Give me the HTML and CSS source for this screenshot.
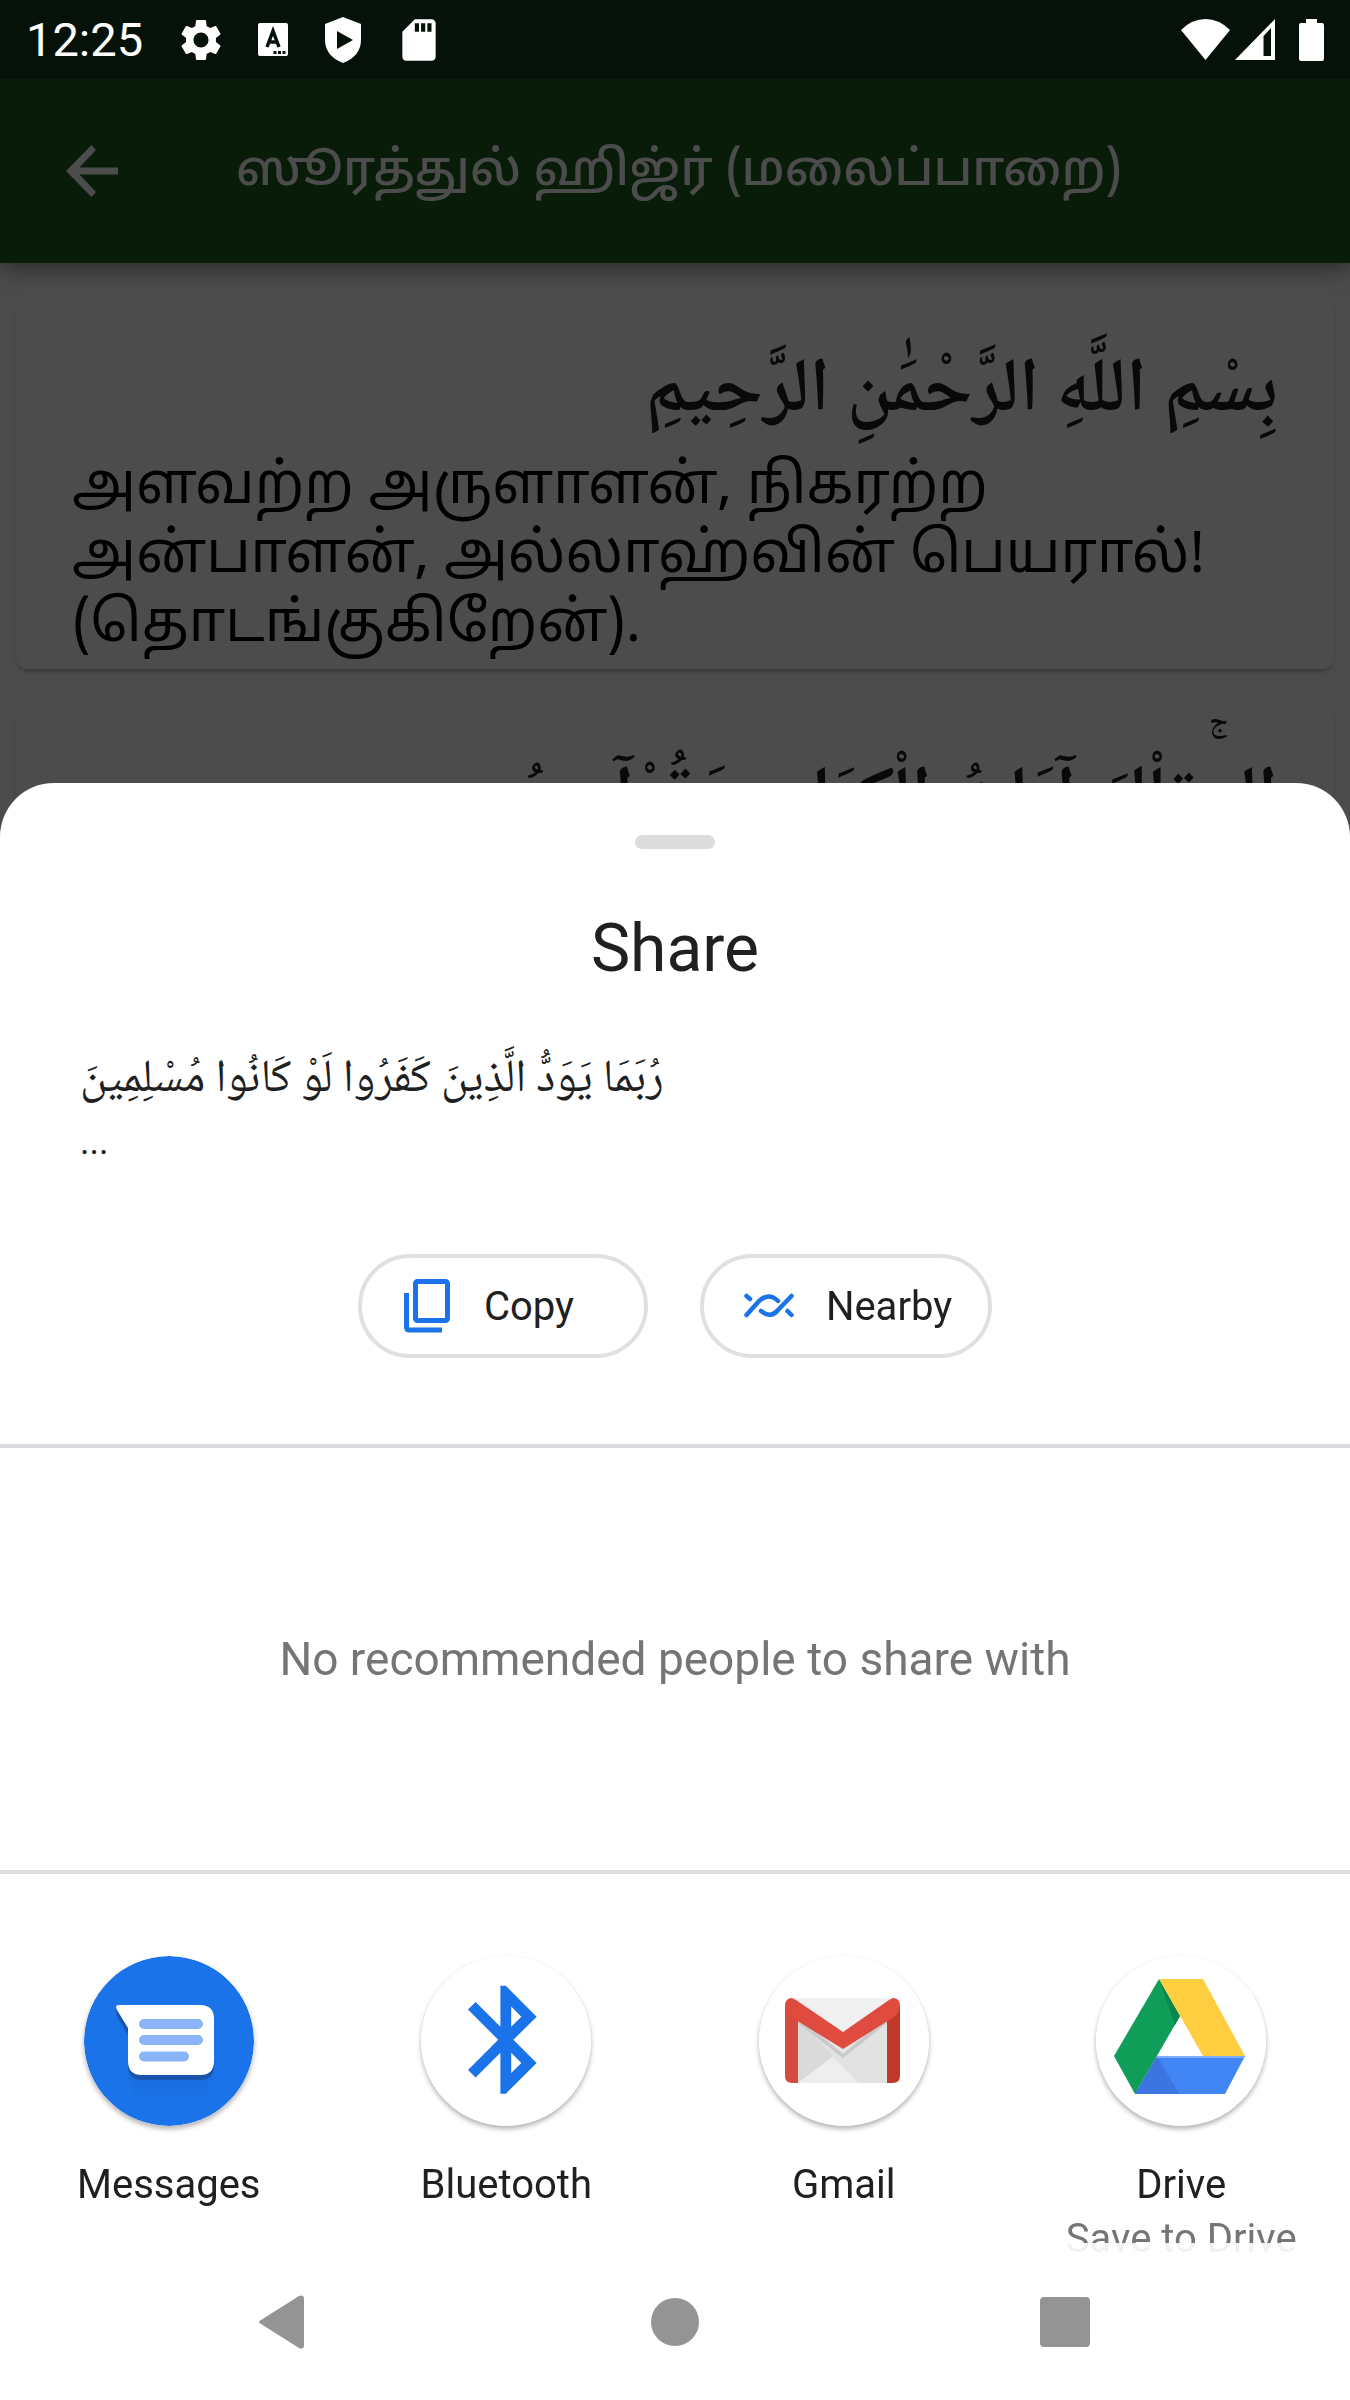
FILE: index.html
```html
<!DOCTYPE html>
<html lang="ta">
<head>
<meta charset="utf-8">
<meta name="viewport" content="width=device-width, initial-scale=1">
<title>Share</title>
<link rel="stylesheet" href="styles.css">
</head>
<body>
<div class="app">
  <header class="app-bar">
    <button class="icon-button" type="button" aria-label="Back">
      <svg width="54" height="54" viewBox="0 0 54 54"><path d="M54 23.500H15.500L32 6 27.500 1 2 27 27.500 53 32 48 15.500 30.500H54z" fill="currentColor"/></svg>
    </button>
    <h1 class="app-title">ஸூரத்துல் ஹிஜ்ர் (மலைப்பாறை)</h1>
  </header>
  <main class="verses">
    <article class="verse">
      <p class="arabic" lang="ar" dir="rtl">بِسْمِ اللَّهِ الرَّحْمَٰنِ الرَّحِيمِ</p>
      <p class="tamil">அளவற்ற அருளாளன், நிகரற்ற அன்பாளன், அல்லாஹ்வின் பெயரால்! (தொடங்குகிறேன்).</p>
    </article>
    <article class="verse">
      <p class="arabic" lang="ar" dir="rtl">الرۚ تِلْكَ آيَاتُ الْكِتَابِ وَقُرْآنٍ مُبِينٍ</p>
    </article>
  </main>
</div>

<div class="scrim"></div>

<div class="status-bar">
  <span class="clock">12:25</span>
  <div class="status-icons">
    <svg width="50" height="50" viewBox="0 0 24 24"><path fill="#fff" d="M19.140 12.940c.04-.3.060-.61.060-.94 0-.32-.02-.64-.07-.94l2.030-1.580c.18-.14.230-.41.120-.61l-1.920-3.320c-.12-.22-.37-.29-.59-.22l-2.390.96c-.5-.38-1.030-.7-1.620-.94l-.36-2.540c-.04-.24-.24-.41-.48-.41h-3.840c-.24 0-.43.170-.47.410l-.36 2.540c-.59.240-1.130.570-1.620.940l-2.390-.96c-.22-.08-.47 0-.59.220L2.740 8.870c-.12.210-.08.470.120.610l2.030 1.580c-.05.300-.09.630-.09.940s.02.640.070.940l-2.030 1.580c-.18.140-.23.410-.12.610l1.920 3.320c.12.220.37.290.59.220l2.390-.96c.5.380 1.030.7 1.620.940l.36 2.540c.05.240.24.410.48.410h3.840c.24 0 .44-.17.470-.41l.36-2.540c.59-.24 1.130-.56 1.620-.94l2.390.96c.22.080.47 0 .59-.22l1.920-3.320c.12-.22.070-.47-.12-.61l-2.010-1.580zM12 15.600c-1.980 0-3.600-1.620-3.600-3.600s1.620-3.600 3.600-3.600 3.600 1.620 3.600 3.600-1.620 3.600-3.600 3.600z"/></svg>
    <svg width="30" height="33" viewBox="0 0 30 33"><rect width="30" height="33" rx="2" fill="#fff"/><path d="M9 24L15 8l6 16M11 19h8" fill="none" stroke="#061209" stroke-width="3.500"/><path d="M15.500 28h3v3h-3zM20 28h3v3h-3zM24.500 28h3v3h-3z" fill="#061209"/></svg>
    <svg class="shield" width="38" height="46" viewBox="0 0 38 46"><path fill="#fff" d="M19 0l18 7v16c0 11-7 19-18 23C8 42 1 34 1 23V7z"/><path fill="#061209" d="M13 14l16 9-16 9z"/></svg>
    <svg width="50" height="50" viewBox="0 0 24 24"><path fill="#fff" d="M18 2h-8L4 8v12c0 1.100.9 2 2 2h12c1.100 0 2-.9 2-2V4c0-1.100-.9-2-2-2zm-6 6h-2V4h2v4zm3 0h-2V4h2v4zm3 0h-2V4h2v4z"/></svg>
  </div>
  <div class="status-signal">
    <svg width="49" height="41" viewBox="0 0 49 41"><path fill="#fff" d="M0 11Q11 0 24.500 0T49 11L24.500 41z"/></svg>
    <svg class="cell" width="40" height="41" viewBox="0 0 40 41"><path fill="#fff" fill-rule="evenodd" d="M0 41L40 0v41zM28.500 17v20H36V9z"/></svg>
    <svg width="25" height="42" viewBox="0 0 25 42"><path fill="#fff" d="M7 0h11v4h5q2 0 2 2v34q0 2-2 2H2q-2 0-2-2V6q0-2 2-2h5z"/></svg>
  </div>
</div>

<section class="sheet" role="dialog" aria-labelledby="share-title">
  <div class="handle"></div>
  <h2 class="sheet-title" id="share-title">Share</h2>
  <div class="preview">
    <p class="preview-text" lang="ar" dir="rtl">رُبَمَا يَوَدُّ الَّذِينَ كَفَرُوا لَوْ كَانُوا مُسْلِمِينَ</p>
    <p class="preview-more">...</p>
  </div>
  <div class="actions">
    <button class="chip" type="button">
      <svg width="50" height="56" viewBox="0 0 50 56"><g fill="none" stroke="#1a73e8" stroke-width="5"><rect x="13.500" y="3.500" width="32" height="39" rx="2"/><path d="M4.500 15v34q0 3 3 3H40"/></g></svg>
      Copy
    </button>
    <button class="chip" type="button">
      <svg width="50" height="56" viewBox="0 0 50 56"><g fill="none" stroke="#1a73e8" stroke-width="4.500" stroke-linecap="round" stroke-linejoin="round"><path d="M2.500 18l3.500 3M2.500 37L15 23q10-9 19 0M17 33q10 8 17-1L47.500 18M43.500 33l4 4"/></g></svg>
      Nearby
    </button>
  </div>
  <p class="no-people">No recommended people to share with</p>
  <div class="targets">
    <button class="target" type="button">
      <svg class="target-icon" viewBox="0 0 170 170">
        <defs><linearGradient id="msg-shade" x1="0" y1="0" x2="0" y2="1"><stop offset="0" stop-color="#1a55ad"/><stop offset="1" stop-color="#1a73e8"/></linearGradient></defs>
        <circle cx="85" cy="85" r="85" fill="#1a73e8"/>
        <path d="M32 53v6l12 22v38l8 28h66l12-32z" fill="url(#msg-shade)" opacity=".55"/>
        <path d="M32 54q0-2 3-2h81q14 0 14 14v44q0 14-14 14H58q-14 0-14-14V78L33 60z" fill="#1a55ad"/>
        <path d="M32 51q0-2 3-2h81q14 0 14 14v42q0 14-14 14H58q-14 0-14-14V72L33 54z" fill="#fff"/>
        <path d="M60 68h54M60 84h54M60 100.500h40" stroke="#8ab4f8" stroke-width="10" stroke-linecap="round"/>
      </svg>
      <span class="target-name">Messages</span>
    </button>
    <button class="target" type="button">
      <svg class="target-icon" viewBox="0 0 170 170">
        <circle cx="85" cy="85" r="85" fill="#fff"/>
        <path transform="translate(20 19) scale(5.400)" fill="#1a73e8" d="M17.710 7.710L12 2h-1v7.590L6.410 5 5 6.410 10.590 12 5 17.590 6.410 19 11 14.410V22h1l5.710-5.710-4.300-4.290 4.300-4.290zM13 5.830l1.880 1.880L13 9.590V5.830zm1.880 10.460L13 18.170v-3.760l1.880 1.880z"/>
      </svg>
      <span class="target-name">Bluetooth</span>
    </button>
    <button class="target" type="button">
      <svg class="target-icon" viewBox="0 0 170 170">
        <circle cx="85" cy="85" r="85" fill="#fff"/>
        <path d="M32 42h103v85H32z" fill="#e6e6e6"/>
        <path d="M39 62l35 38-35 27z" fill="#dadada"/>
        <path d="M39 62l35 38 26 27h28V62L84 96z" fill="#e2e2e2"/>
        <path d="M39 127l35-26 25 26z" fill="#eee"/>
        <path d="M32 42h103L84 80z" fill="#f0f0f0"/>
        <path d="M39 61l45 37 44-37v6L84 102 39 67z" fill="#c9c9c9"/>
        <path d="M26 50h13v77h-6q-7 0-7-7z" fill="#d54b3d"/>
        <path d="M141 50h-13v77h6q7 0 7-7z" fill="#c1392b"/>
        <path d="M26 50q0-8 7-8l4 2 47 32 46-32 4-2q7 0 7 8-1 7-6 11L84 93 32 61q-6-4-6-11z" fill="#df4c3f"/>
      </svg>
      <span class="target-name">Gmail</span>
    </button>
    <button class="target" type="button">
      <svg class="target-icon" viewBox="0 0 170 170">
        <circle cx="85" cy="85" r="85" fill="#fff"/>
        <path d="M63 23L84 60 39 138 18 100z" fill="#0f9d58"/>
        <path d="M63 23l21 37-5 9z" fill="#0c874b"/>
        <path d="M63 23h44l42 77h-42z" fill="#ffcd40"/>
        <path d="M61 100h88l-20 38H39z" fill="#4285f4"/>
        <path d="M61 100l22 38H39z" fill="#3c74e0"/>
        <path d="M61 100h88l-1 2H60z" fill="#7fadf7"/>
      </svg>
      <span class="target-name">Drive</span>
      <span class="target-detail">Save to Drive</span>
    </button>
  </div>
</section>

<nav class="nav-bar">
  <button class="nav-button" type="button" aria-label="Back"><svg width="54" height="54" viewBox="0 0 54 54"><path d="M3 25L41 1q5-2 5 3v46q0 5-5 3L3 29q-4-2 0-4z" fill="#949494"/></svg></button>
  <button class="nav-button" type="button" aria-label="Home"><svg width="54" height="54" viewBox="0 0 54 54"><circle cx="27" cy="27" r="24" fill="#949494"/></svg></button>
  <button class="nav-button" type="button" aria-label="Recent apps"><svg width="54" height="54" viewBox="0 0 54 54"><rect x="2" y="2" width="50" height="50" rx="4" fill="#949494"/></svg></button>
</nav>
</body>
</html>
```
FILE: styles.css
```css
* {
  box-sizing: border-box;
}

body {
  margin: 0;
  min-height: 100vh;
  overflow: hidden;
  background: #fafafa;
  color: #202020;
  font-family: Roboto, "Noto Sans", sans-serif;
}

h1, h2, p {
  margin: 0;
  font-weight: 400;
}

button {
  margin: 0;
  padding: 0;
  border: 0;
  background: none;
  color: inherit;
  font: inherit;
}

svg {
  display: block;
  flex: none;
}

/* Page behind the sheet */
.app-bar {
  display: flex;
  align-items: center;
  gap: 118px;
  height: 263px;
  padding: 83px 64px 0;
  background: #1b5e20;
  color: #fff;
  box-shadow: 0 6px 20px rgba(0, 0, 0, .4);
  position: relative;
}

.icon-button {
  padding-bottom: 4px;
}

.app-title {
  font-family: "Noto Sans Tamil", "Noto Sans", sans-serif;
  font-size: 49px;
  line-height: 72px;
  font-weight: 500;
  white-space: nowrap;
}

.verses {
  display: flex;
  flex-direction: column;
  gap: 33px;
  padding: 31px 16px;
}

.verse {
  padding: 40px 56px 8px;
  border-radius: 12px;
  background: #fff;
  box-shadow: 0 4px 4px -2px rgba(0, 0, 0, .3);
}

.arabic {
  font-family: "Noto Naskh Arabic", "Amiri", "Noto Sans Arabic", "DejaVu Sans", serif;
  font-size: 76px;
  line-height: 120px;
  font-weight: 600;
  color: #202020;
}

.tamil {
  font-family: "Noto Sans Tamil", "Noto Sans", sans-serif;
  font-size: 57px;
  line-height: 69px;
  color: #000;
}

.scrim {
  position: fixed;
  inset: 0;
  background: rgba(0, 0, 0, .7);
}

/* System status bar */
.status-bar {
  position: fixed;
  inset: 0 0 auto;
  display: flex;
  align-items: center;
  height: 79px;
  padding: 0 26px;
  background: #061209;
  color: #fff;
}

.clock {
  font-size: 47px;
  line-height: 56px;
}

.status-icons {
  display: flex;
  align-items: center;
  gap: 32px;
  margin-left: 33px;
}

.shield {
  margin-left: 4px;
}

.status-signal {
  display: flex;
  align-items: center;
  gap: 5px;
  margin-left: auto;
}

.cell {
  margin-right: 19px;
}

/* Share sheet */
.sheet {
  position: fixed;
  inset: auto 0 0;
  display: flex;
  flex-direction: column;
  padding: 52px 0 112px;
  border-radius: 54px 54px 0 0;
  background: #fff;
}

.handle {
  align-self: center;
  width: 80px;
  height: 14px;
  border-radius: 7px;
  background: #dcdcdc;
}

.sheet-title {
  margin-top: 60px;
  font-size: 66px;
  line-height: 80px;
  text-align: center;
}

.preview {
  display: flex;
  flex-direction: column;
  align-items: flex-start;
  margin-top: 52px;
  padding: 0 80px;
}

.preview-text {
  font-family: "Noto Naskh Arabic", "Noto Sans Arabic", "DejaVu Sans", sans-serif;
  font-size: 46px;
  line-height: 80px;
}

.preview-more {
  font-size: 36px;
  line-height: 42px;
}

.actions {
  display: flex;
  justify-content: center;
  gap: 52px;
  margin-top: 91px;
}

.chip {
  display: flex;
  align-items: center;
  gap: 32px;
  min-width: 290px;
  height: 104px;
  padding: 0 36px 0 40px;
  border: 4px solid #e0e0e0;
  border-radius: 52px;
  font-size: 40px;
}

.no-people {
  margin-top: 86px;
  padding: 184px 0;
  border: solid #dadce0;
  border-width: 4px 0;
  color: #757575;
  font-size: 46px;
  line-height: 54px;
  text-align: center;
}

.targets {
  display: grid;
  grid-template-columns: repeat(4, 1fr);
  padding-top: 82px;
}

.target {
  display: flex;
  flex-direction: column;
  align-items: center;
  height: 332px;
}

.target-icon {
  width: 170px;
  height: 170px;
  border-radius: 50%;
  box-shadow: 0 3px 5px rgba(0, 0, 0, .3);
}

.target-name {
  margin-top: 35px;
  font-size: 40px;
  line-height: 48px;
}

.target-detail {
  margin-top: 6px;
  color: #757575;
  font-size: 40px;
  line-height: 48px;
}

/* System navigation */
.nav-bar {
  position: fixed;
  inset: auto 0 0;
  display: grid;
  grid-template-columns: repeat(3, 1fr);
  height: 157px;
  padding: 0 90px;
  background: rgba(255, 255, 255, .9);
}

.nav-button {
  display: flex;
  align-items: center;
  justify-content: center;
}
```
